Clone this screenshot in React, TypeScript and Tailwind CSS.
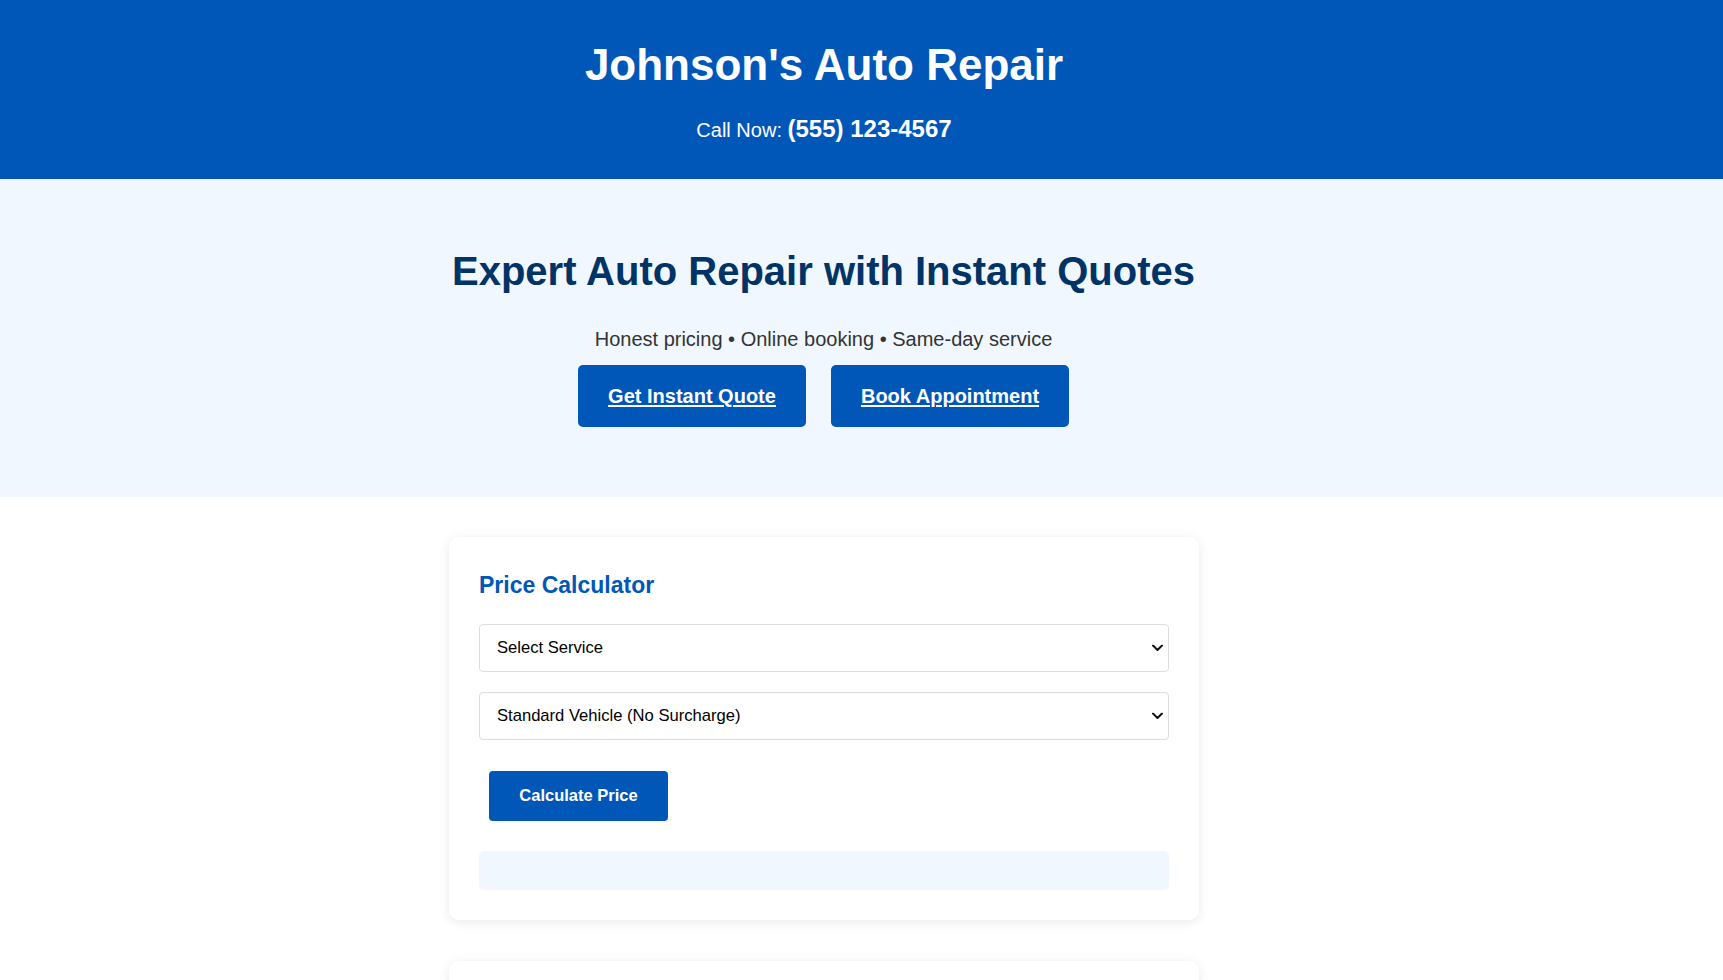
import React from "react";

function Chevron() {
  return (
    <svg width="11" height="7" viewBox="0 0 11 7" className="pointer-events-none absolute right-[6px] top-1/2 -translate-y-1/2" aria-hidden="true">
      <path d="M1 1 L5.5 5.5 L10 1" fill="none" stroke="#111" strokeWidth="2" strokeLinecap="round" strokeLinejoin="round" />
    </svg>
  );
}

function Select({ children }: { children: React.ReactNode }) {
  return (
    <div className="relative w-full">
      <select className="w-full h-[48px] appearance-none rounded-[4px] border border-[#dcdcdc] bg-white pl-[17px] pr-[30px] text-[16.6px] text-black outline-none [font-family:'Liberation_Sans',Arial,sans-serif]">
        {children}
      </select>
      <Chevron />
    </div>
  );
}

export default function App() {
  return (
    <div className="min-h-screen bg-white [font-family:'Liberation_Sans',Arial,sans-serif]">
      <header className="bg-[#0057b7] text-white">
        <div className="pr-[75px] pt-[39px] pb-[34px] text-center">
          <h1 className="text-[44px] font-bold leading-[52px]">Johnson's Auto Repair</h1>
          <p className="mt-[23px] text-[20px] leading-[30px]">
            Call Now: <strong className="text-[24px] font-bold">(555) 123-4567</strong>
          </p>
        </div>
      </header>

      <section className="bg-[#f0f7ff]">
        <div className="pr-[76px] pt-[69px] pb-[70px] flex flex-col items-center text-center">
          <h2 className="text-[40px] font-bold leading-[46px] text-[#003366]">
            Expert Auto Repair with Instant Quotes
          </h2>
          <p className="mt-[29px] text-[20px] leading-[32px] text-[#333333]">
            Honest pricing • Online booking • Same-day service
          </p>
          <div className="mt-[10px] flex gap-[25px]">
            <a href="#quote" className="flex h-[62px] w-[228px] items-center justify-center rounded-[5px] bg-[#0057b7] text-[20px] font-bold text-white underline underline-offset-2">
              Get Instant Quote
            </a>
            <a href="#book" className="flex h-[62px] w-[238px] items-center justify-center rounded-[5px] bg-[#0057b7] text-[20px] font-bold text-white underline underline-offset-2">
              Book Appointment
            </a>
          </div>
        </div>
      </section>

      <main className="pr-[75px] pt-[40px] pb-[40px]">
        <div className="mx-auto w-[750px] rounded-[10px] bg-white px-[30px] pt-[35px] pb-[30px] shadow-[0_2px_12px_rgba(0,0,0,0.09)]">
          <h3 className="text-[23px] font-bold leading-[26px] text-[#0057b7]">Price Calculator</h3>
          <div className="mt-[26px] flex flex-col gap-[20px]">
            <Select>
              <option>Select Service</option>
              <option>Oil Change</option>
              <option>Brake Repair</option>
            </Select>
            <Select>
              <option>Standard Vehicle (No Surcharge)</option>
              <option>SUV / Truck</option>
            </Select>
          </div>
          <button className="mx-[10px] mt-[31px] flex h-[50px] w-[179px] items-center justify-center rounded-[4px] bg-[#0057b7] pb-[2px] text-[16.5px] font-bold text-white">
            Calculate Price
          </button>
          <div className="mt-[30px] h-[39px] rounded-[5px] bg-[#f0f7ff]"></div>
        </div>

        <div className="mx-auto mt-[41px] h-[300px] w-[750px] rounded-[10px] bg-white shadow-[0_2px_12px_rgba(0,0,0,0.09)]"></div>
      </main>
    </div>
  );
}
